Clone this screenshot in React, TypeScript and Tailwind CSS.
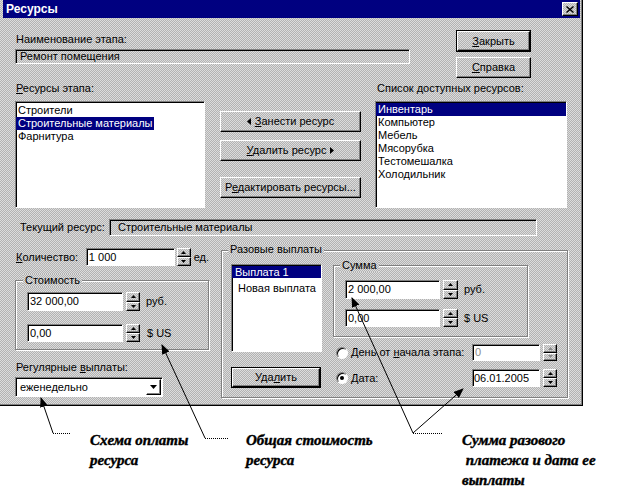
import React from "react";

const dither = "bg-[image:repeating-conic-gradient(#b2b2b2_0%_25%,#dcdcdc_0%_50%)] bg-[length:2px_2px]";
const sunken = "border border-t-[#808080] border-l-[#808080] border-r-white border-b-white shadow-[inset_1px_1px_0_#000]";
const raised = "border border-t-white border-l-white border-r-black border-b-black shadow-[inset_-1px_-1px_0_#808080]";
const etched = "border border-[#808080] shadow-[inset_1px_1px_0_#fff,1px_1px_0_#fff]";

type Dir = "up" | "down" | "left" | "right";

function Tri({ dir, color = "#000" }: { dir: Dir; color?: string }) {
  if (dir === "up" || dir === "down") {
    return (
      <svg width="5" height="3" viewBox="0 0 5 3">
        <polygon points={dir === "up" ? "0,3 5,3 2.5,0" : "0,0 5,0 2.5,3"} fill={color} />
      </svg>
    );
  }
  return (
    <svg width="4" height="7" viewBox="0 0 4 7">
      <polygon points={dir === "left" ? "4,0 4,7 0,3.5" : "0,0 0,7 4,3.5"} fill={color} />
    </svg>
  );
}

function Spin({ w = "w-[14px]", disabled }: { w?: string; disabled?: boolean }) {
  const c = disabled ? "#8a8a8a" : "#000";
  return (
    <div className={`${w} self-stretch flex flex-col`}>
      <div className={`flex-1 ${raised} flex items-center justify-center`}>
        <Tri dir="up" color={c} />
      </div>
      <div className={`flex-1 ${raised} flex items-center justify-center`}>
        <Tri dir="down" color={c} />
      </div>
    </div>
  );
}

function Btn({ cls, def, children }: { cls: string; def?: boolean; children: React.ReactNode }) {
  if (def) {
    return (
      <div className={`${cls} border border-black flex`}>
        <div className={`flex-1 ${raised} flex items-center justify-center`}>{children}</div>
      </div>
    );
  }
  return <div className={`${cls} ${raised} flex items-center justify-center`}>{children}</div>;
}

function Group({ cls, legend, legendCls, children }: { cls: string; legend: string; legendCls: string; children: React.ReactNode }) {
  return (
    <div className={`relative ${etched} ${cls}`}>
      <span className={`absolute ${legendCls} px-[2px] leading-[13px] ${dither}`}>{legend}</span>
      {children}
    </div>
  );
}

function Radio({ on }: { on?: boolean }) {
  return (
    <span className="w-[12px] h-[12px] rounded-full bg-white border border-t-[#808080] border-l-[#808080] border-r-white border-b-white shadow-[inset_1px_1px_0_#000] flex items-center justify-center">
      {on && <span className="w-[4px] h-[4px] rounded-full bg-black" />}
    </span>
  );
}

export default function App() {
  return (
    <div className="relative w-[624px] h-[498px] bg-white overflow-hidden font-['Liberation_Sans',Arial,sans-serif] text-[11px] leading-[13px] text-black">
      <div className={`w-[583px] h-[406px] border-r border-b border-black shadow-[inset_-1px_-1px_0_#808080] ${dither} flex flex-col`}>
        {/* title bar */}
        <div className="ml-[3px] mr-[2px] h-[18px] bg-[#000080] flex items-center justify-between pl-[3px] pr-[2px]">
          <span className="text-white font-bold text-[12px]">Ресурсы</span>
          <div className={`w-[16px] h-[14px] ${raised} ${dither} flex items-center justify-center`}>
            <svg width="8" height="7" viewBox="0 0 8 7">
              <path d="M0.5 0.5 L7.5 6.5 M7.5 0.5 L0.5 6.5" stroke="#000" strokeWidth="1.4" />
            </svg>
          </div>
        </div>

        {/* row A */}
        <div className="flex mt-[12px]">
          <div className="ml-[15px] w-[395px] flex flex-col pt-[3px]">
            <div className="h-[13px] pl-[1px]">Наименование этапа:</div>
            <div className={`mt-[3px] h-[15px] ${sunken} pl-[4px] flex items-center`}>Ремонт помещения</div>
          </div>
          <div className="ml-[46px] flex flex-col gap-[5px]">
            <Btn cls="w-[75px] h-[22px]" def>
              <span><u>З</u>акрыть</span>
            </Btn>
            <Btn cls="w-[75px] h-[21px]">
              <span><u>С</u>правка</span>
            </Btn>
          </div>
        </div>

        {/* row B */}
        <div className="flex mt-[4px]">
          <div className="ml-[15px] w-[190px] flex flex-col">
            <div className="h-[13px] pl-[1px]"><u>Р</u>есурсы этапа:</div>
            <div className={`mt-[6px] h-[107px] bg-white ${sunken} pt-[2px] flex flex-col items-start`}>
              <div className="h-[13px] pl-[2px] pr-[1px] leading-[13px]">Строители</div>
              <div className="h-[13px] pl-[2px] pr-[1px] leading-[13px] bg-[#000080] text-white">Строительные материалы</div>
              <div className="h-[13px] pl-[2px] pr-[1px] leading-[13px]">Фарнитура</div>
            </div>
          </div>
          <div className="ml-[15px] w-[141px] flex flex-col">
            <Btn cls="mt-[29px] h-[21px]">
              <span className="flex items-center gap-[4px]">
                <Tri dir="left" />
                <span><u>З</u>анести ресурс</span>
              </span>
            </Btn>
            <Btn cls="mt-[8px] h-[21px]">
              <span className="flex items-center gap-[4px]">
                <span><u>У</u>далить ресурс</span>
                <Tri dir="right" />
              </span>
            </Btn>
            <Btn cls="mt-[16px] h-[21px]">
              <span>Р<u>е</u>дактировать ресурсы...</span>
            </Btn>
          </div>
          <div className="ml-[14px] w-[192px] flex flex-col">
            <div className="h-[13px] pl-[2px]">Список доступных ресурсов:</div>
            <div className={`mt-[6px] h-[107px] bg-white ${sunken} pt-[1px] flex flex-col`}>
              <div className="h-[13px] pl-[2px] bg-[#000080] text-white">Инвентарь</div>
              <div className="h-[13px] pl-[2px]">Компьютер</div>
              <div className="h-[13px] pl-[2px]">Мебель</div>
              <div className="h-[13px] pl-[2px]">Мясорубка</div>
              <div className="h-[13px] pl-[2px]">Тестомешалка</div>
              <div className="h-[13px] pl-[2px]">Холодильник</div>
            </div>
          </div>
        </div>

        {/* row C */}
        <div className="flex items-center mt-[11px] h-[17px]">
          <div className="ml-[20px] w-[89px]">Текущий ресурс:</div>
          <div className={`w-[428px] h-[17px] ${sunken} pl-[8px] flex items-center`}>Строительные материалы</div>
        </div>

        {/* row D */}
        <div className="flex mt-[12px]">
          <div className="ml-[15px] w-[194px] flex flex-col">
            <div className="flex h-[18px]">
              <div className="w-[71px] pl-[1px] flex items-center"><u>К</u>оличество:</div>
              <div className={`w-[89px] bg-white ${sunken} pl-[2px] flex items-center`}>1 000</div>
              <div className="ml-[2px] flex">
                <Spin w="w-[14px]" />
              </div>
              <div className="ml-[3px] flex items-center">ед.</div>
            </div>
            <Group cls="mt-[14px] h-[70px] pt-[11px] pl-[11px] flex flex-col" legend="Стоимость" legendCls="-top-[7px] left-[7px]">
              <div className="flex h-[19px]">
                <div className={`w-[96px] bg-white ${sunken} pl-[2px] flex items-center`}>32 000,00</div>
                <div className="ml-[3px] flex">
                  <Spin w="w-[14px]" />
                </div>
                <div className="ml-[6px] flex items-center">руб.</div>
              </div>
              <div className="flex h-[18px] mt-[13px]">
                <div className={`w-[96px] bg-white ${sunken} pl-[2px] flex items-center`}>0,00</div>
                <div className="ml-[3px] flex">
                  <Spin w="w-[14px]" />
                </div>
                <div className="ml-[7px] flex items-center">$ US</div>
              </div>
            </Group>
            <div className="mt-[11px] h-[13px] pl-[1px]">Регулярные <u>в</u>ыплаты:</div>
            <div className={`mt-[3px] h-[20px] w-[148px] bg-white ${sunken} flex items-stretch p-[1px]`}>
              <div className="flex-1 pl-[3px] flex items-center">еженедельно</div>
              <div className={`w-[15px] ${raised} flex items-center justify-center`}>
                <svg width="7" height="4" viewBox="0 0 7 4">
                  <polygon points="0,0 7,0 3.5,4" fill="#000" />
                </svg>
              </div>
            </div>
          </div>

          <Group cls="ml-[12px] mt-[2px] w-[347px] h-[148px] flex" legend="Разовые выплаты" legendCls="-top-[8px] left-[6px]">
            <div className="ml-[9px] mt-[13px] w-[91px] flex flex-col">
              <div className={`h-[88px] bg-white ${sunken} pt-[1px] flex flex-col`}>
                <div className="h-[12px] leading-[12px] pl-[3px] bg-[#000080] text-white">Выплата 1</div>
                <div className="h-[13px] leading-[14px] pl-[6px] mt-[3px]">Новая выплата</div>
              </div>
              <Btn cls="mt-[15px] h-[21px] w-[90px]" def>
                <span>Уда<u>л</u>ить</span>
              </Btn>
            </div>
            <div className="ml-[11px] mt-[14px] flex flex-col">
              <Group cls="w-[195px] h-[72px] pt-[14px] pl-[11px] flex flex-col" legend="Сумма" legendCls="-top-[7px] left-[6px]">
                <div className="flex h-[19px]">
                  <div className={`w-[95px] bg-white ${sunken} pl-[2px] flex items-center`}>2 000,00</div>
                  <div className="ml-[3px] flex">
                    <Spin w="w-[15px]" />
                  </div>
                  <div className="ml-[6px] flex items-center">руб.</div>
                </div>
                <div className="flex h-[18px] mt-[10px]">
                  <div className={`w-[95px] bg-white ${sunken} pl-[2px] flex items-center`}>0,00</div>
                  <div className="ml-[3px] flex">
                    <Spin w="w-[15px]" />
                  </div>
                  <div className="ml-[6px] flex items-center">$ US</div>
                </div>
              </Group>
              <div className="flex h-[17px] mt-[7px]">
                <div className="w-[139px] pl-[3px] flex items-center gap-[3px]">
                  <Radio />
                  <span>День от <u>н</u>ачала этапа:</span>
                </div>
                <div className={`w-[68px] bg-white ${sunken} pl-[2px] flex items-center text-[#8a8a8a]`}>0</div>
                <div className="ml-[3px] flex">
                  <Spin w="w-[14px]" disabled />
                </div>
              </div>
              <div className="flex h-[18px] mt-[8px]">
                <div className="w-[139px] pl-[3px] flex items-center gap-[3px]">
                  <Radio on />
                  <span><u>Д</u>ата:</span>
                </div>
                <div className={`w-[68px] bg-white ${sunken} pl-[1px] flex items-center`}>06.01.2005</div>
                <div className="ml-[3px] flex">
                  <Spin w="w-[14px]" />
                </div>
              </div>
            </div>
          </Group>
        </div>
      </div>

      {/* annotations */}
      <div className="flex mt-[24px] font-['Liberation_Serif','Times_New_Roman',serif] italic font-bold text-[15px] leading-[20px] [-webkit-text-stroke:0.4px_#000]">
        <div className="ml-[90px] w-[156px] whitespace-pre">
          Схема оплаты
          <br />
          ресурса
        </div>
        <div className="w-[216px] whitespace-pre">
          Общая стоимость
          <br />
          ресурса
        </div>
        <div className="whitespace-pre">
          Сумма разового
          <br />
          {" платежа и дата ее"}
          <br />
          выплаты
        </div>
      </div>

      <svg className="absolute inset-0 pointer-events-none" width="624" height="498" viewBox="0 0 624 498">
        <defs>
          <marker id="ah" markerWidth="10" markerHeight="8" refX="9" refY="4" orient="auto" markerUnits="userSpaceOnUse">
            <path d="M0,0 L10,4 L0,8 z" fill="#000" />
          </marker>
        </defs>
        <line x1="53" y1="433" x2="41" y2="398" stroke="#000" strokeWidth="1" markerEnd="url(#ah)" />
        <line x1="53" y1="433.5" x2="70" y2="433.5" stroke="#000" strokeWidth="1" strokeDasharray="1 1" />
        <line x1="205" y1="438" x2="162" y2="345" stroke="#000" strokeWidth="1" markerEnd="url(#ah)" />
        <line x1="205" y1="438.5" x2="228" y2="438.5" stroke="#000" strokeWidth="1" strokeDasharray="1 1" />
        <line x1="413" y1="433" x2="352" y2="298" stroke="#000" strokeWidth="1" markerEnd="url(#ah)" />
        <line x1="413" y1="433" x2="463" y2="389" stroke="#000" strokeWidth="1" markerEnd="url(#ah)" />
        <line x1="413" y1="433.5" x2="443" y2="433.5" stroke="#000" strokeWidth="1" strokeDasharray="1 1" />
      </svg>
    </div>
  );
}
